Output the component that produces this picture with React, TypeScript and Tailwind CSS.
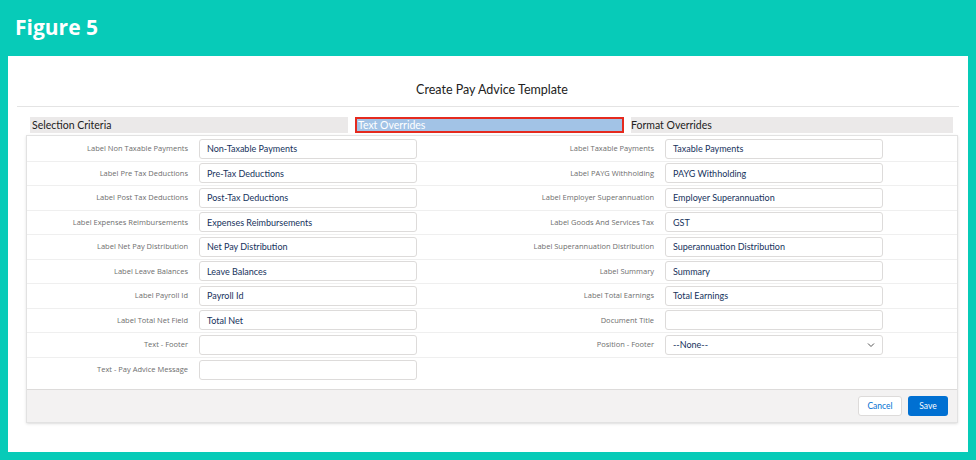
import React from "react";

const left: [string, string][] = [
  ["Label Non Taxable Payments", "Non-Taxable Payments"],
  ["Label Pre Tax Deductions", "Pre-Tax Deductions"],
  ["Label Post Tax Deductions", "Post-Tax Deductions"],
  ["Label Expenses Reimbursements", "Expenses Reimbursements"],
  ["Label Net Pay Distribution", "Net Pay Distribution"],
  ["Label Leave Balances", "Leave Balances"],
  ["Label Payroll Id", "Payroll Id"],
  ["Label Total Net Field", "Total Net"],
  ["Text - Footer", ""],
  ["Text - Pay Advice Message", ""],
];
const right: [string, string][] = [
  ["Label Taxable Payments", "Taxable Payments"],
  ["Label PAYG Withholding", "PAYG Withholding"],
  ["Label Employer Superannuation", "Employer Superannuation"],
  ["Label Goods And Services Tax", "GST"],
  ["Label Superannuation Distribution", "Superannuation Distribution"],
  ["Label Summary", "Summary"],
  ["Label Total Earnings", "Total Earnings"],
  ["Document Title", ""],
  ["Position - Footer", "select"],
  ["", "none"],
];

function Field({ label, value }: { label: string; value: string }) {
  return (
    <div className="flex items-center h-full">
      <div className="w-[172px] text-right text-[7.5px] text-[#6e6e6e] pr-[11px] shrink-0" style={{ fontFamily: "'Open Sans', sans-serif" }}>{label}</div>
      {value === "none" ? null : (
        <div className="w-[218px] h-[20px] border border-[#dddbda] rounded-[3px] bg-white flex items-center px-[7px] text-[9px] text-[#16325c] justify-between">
          <span>{value === "select" ? "--None--" : value}</span>
          {value === "select" && (
            <svg width="8" height="6" viewBox="0 0 8 6"><path d="M1 1.5 L4 4.5 L7 1.5" fill="none" stroke="#555" strokeWidth="1" /></svg>
          )}
        </div>
      )}
    </div>
  );
}

export default function App() {
  return (
    <div className="w-[976px] h-[460px] bg-[#07cbb8] flex flex-col" style={{ fontFamily: "Lato, 'Open Sans', sans-serif" }}>
      <div className="h-[56px] flex items-center pl-[15px] text-white text-[21px] font-bold shrink-0" style={{ fontFamily: "'Open Sans', Lato, sans-serif" }}>Figure 5</div>
      <div className="mx-[8px] mb-[8px] flex-1 bg-white px-[9px] pt-[25px]">
        <div className="text-center text-[12.5px] text-[#222] h-[20px] pl-[8px]">Create Pay Advice Template</div>
        <div className="h-px bg-[#e4e4e4] mt-[5px]" />
        <div className="flex mt-[10px] ml-[13px] mr-[6px] h-[16px] text-[10.5px]">
          <div className="w-[318px] bg-[#ebe9e9] text-[#222] pl-[2px] leading-[16px]">Selection Criteria</div>
          <div className="w-[269px] ml-[7px] bg-[#a2c3e6] border-2 border-[#e52a1e] text-white pl-[1px] leading-[13px]">Text Overrides</div>
          <div className="flex-1 ml-[7px] bg-[#ebe9e9] text-[#222] pl-[0px] leading-[16px]">Format Overrides</div>
        </div>
        <div className="ml-[9px] mr-[1px] mt-[2px] border border-[#e2e2e2] shadow-sm">
          <div className="flex flex-col pt-[1px] pb-[7px]">
            {left.map((l, i) => (
              <div key={i} className="flex h-[24.5px] border-b border-[#efefef] last:border-b-0">
                <div className="w-[466px]"><Field label={l[0]} value={l[1]} /></div>
                <Field label={right[i][0]} value={right[i][1]} />
              </div>
            ))}
          </div>
          <div className="h-[33px] bg-[#f3f2f2] border-t border-[#dddbda] flex items-center justify-end pr-[9px] gap-[6px]">
            <div className="h-[20px] w-[44px] border border-[#dddbda] bg-white rounded-[3px] text-[8.5px] text-[#0070d2] flex items-center justify-center">Cancel</div>
            <div className="h-[20px] w-[40px] bg-[#0070d2] rounded-[3px] text-[8.5px] text-white flex items-center justify-center">Save</div>
          </div>
        </div>
      </div>
    </div>
  );
}
